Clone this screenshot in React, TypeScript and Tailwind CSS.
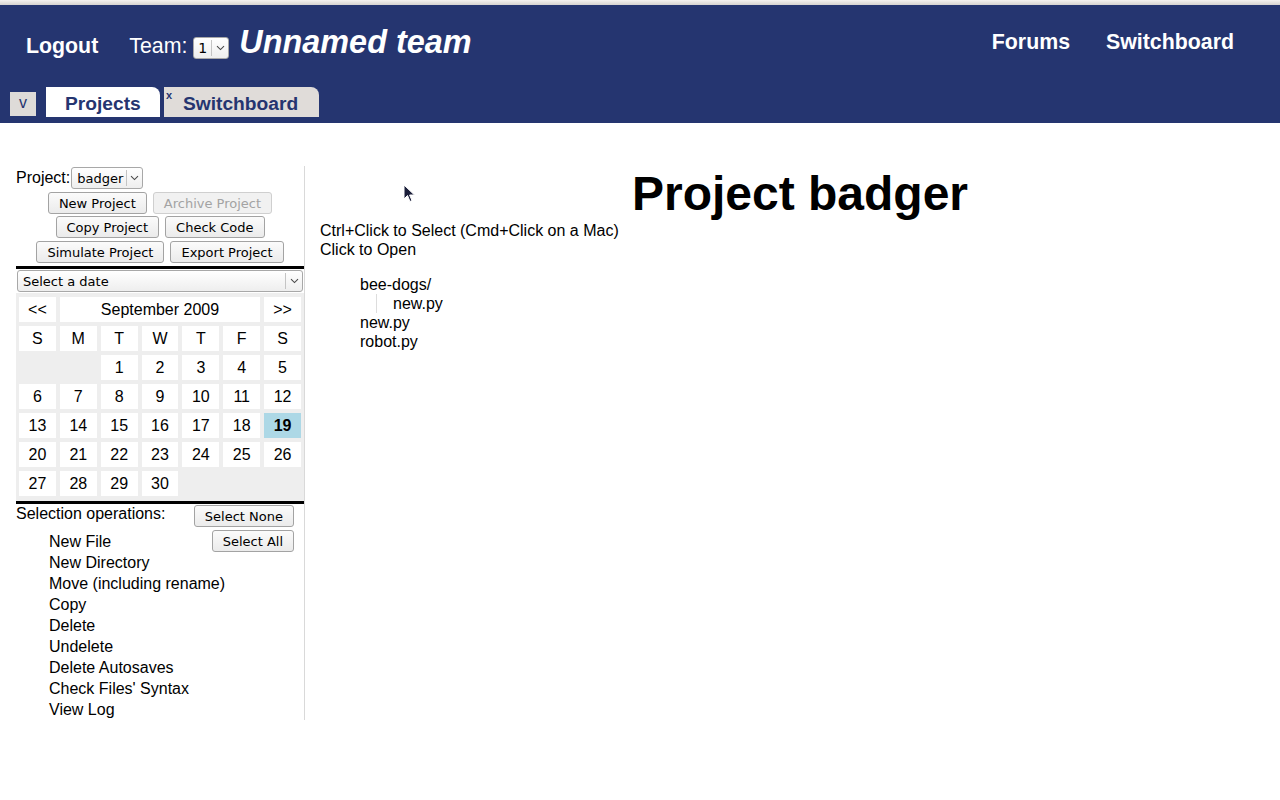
import React from "react";

const NAVY = "bg-[#253570]";

function Chevron() {
  return (
    <svg width="9" height="6" viewBox="0 0 9 6" className="block">
      <path d="M1 1.2 L4.5 4.6 L8 1.2" fill="none" stroke="#4a4a4a" strokeWidth="1.1" />
    </svg>
  );
}

function FakeSelect({ label, className }: { label: string; className: string }) {
  return (
    <div
      className={`flex items-center h-[22px] border border-[#a8a8a8] rounded-[3px] bg-linear-to-b from-white to-[#eeeeee] font-['DejaVu_Sans',sans-serif] text-[13px] text-black ${className}`}
    >
      <span className="flex-1 pl-[5px] pr-[3px] leading-none whitespace-nowrap">{label}</span>
      <span className="w-px self-stretch my-[2px] bg-[#c4c4c4]" />
      <span className="w-[16px] flex justify-center">
        <Chevron />
      </span>
    </div>
  );
}

function Btn({ children, disabled }: { children: React.ReactNode; disabled?: boolean }) {
  return (
    <div
      className={
        disabled
          ? "h-[22px] px-[10px] flex items-center border border-[#cfcfcf] rounded-[3px] bg-[#f1f1f1] text-[#a3a3a3] text-[13px] font-['DejaVu_Sans',sans-serif] leading-none whitespace-nowrap"
          : "h-[22px] px-[10px] flex items-center border border-[#a3a3a3] rounded-[3px] bg-linear-to-b from-[#fbfbfb] to-[#ebebeb] text-black text-[13px] font-['DejaVu_Sans',sans-serif] leading-none whitespace-nowrap"
      }
    >
      {children}
    </div>
  );
}

function Cell({ children, bold, hl }: { children?: React.ReactNode; bold?: boolean; hl?: boolean }) {
  return (
    <div
      className={`h-[25px] flex items-center justify-center text-[16px] leading-none ${hl ? "bg-[#add8e6]" : "bg-white"} ${bold ? "font-bold" : ""}`}
    >
      {children}
    </div>
  );
}

export default function App() {
  const weeks: (number | null)[][] = [
    [null, null, 1, 2, 3, 4, 5],
    [6, 7, 8, 9, 10, 11, 12],
    [13, 14, 15, 16, 17, 18, 19],
    [20, 21, 22, 23, 24, 25, 26],
    [27, 28, 29, 30, null, null, null],
  ];
  const ops = [
    "New File",
    "New Directory",
    "Move (including rename)",
    "Copy",
    "Delete",
    "Undelete",
    "Delete Autosaves",
    "Check Files' Syntax",
    "View Log",
  ];
  return (
    <div className="relative min-h-[800px] bg-white text-black font-['Liberation_Sans',Arial,sans-serif]">
      <div className="h-[5px] bg-linear-to-b from-[#f4f2f0] to-[#d6d3d0]" />
      <div className={`${NAVY} text-white`}>
        <div className="flex justify-between h-[82px]">
          <div className="flex items-baseline pl-[26px] pt-[13px]">
            <span className="font-bold text-[21.33px]">Logout</span>
            <span className="ml-[31px] text-[21.33px]">Team:</span>
            <FakeSelect label="1" className="ml-[6px] w-[36px] h-[21px] text-[14px] [&>span:first-child]:pl-[4px]" />
            <span className="ml-[10px] font-bold italic text-[32.4px]">Unnamed team</span>
          </div>
          <div className="flex items-baseline gap-[36px] pr-[46px] pt-[22px] font-bold text-[21.33px]">
            <span>Forums</span>
            <span>Switchboard</span>
          </div>
        </div>
        <div className="flex items-end pl-[10px] pb-[6px] h-[36px]">
          <div className="w-[26px] h-[24px] mb-[1px] bg-[#dedbd8] text-[#253570] flex items-center justify-center text-[16px] leading-none pb-[2px]">
            v
          </div>
          <div className="ml-[10px] w-[114px] h-[30px] bg-white rounded-tr-[8px] pl-[19px] pt-[3px] flex items-center font-bold text-[19.2px] leading-none text-[#253570]">
            Projects
          </div>
          <div className="relative ml-[4px] w-[155px] h-[30px] bg-[#e0dcd9] rounded-tr-[8px] pl-[19px] pt-[3px] flex items-center font-bold text-[19.2px] leading-none text-[#253570]">
            <span className="absolute left-[2px] top-[3px] text-[11px] leading-none font-bold">x</span>
            Switchboard
          </div>
        </div>
      </div>

      <div className="flex pt-[43px]">
        <div className="ml-4 w-[289px] h-[554px] border-r border-[#d9d9d9] shrink-0 text-[16px] leading-[22px]">
          <div className="flex items-center pt-[1px] h-[23px]">
            <span>Project:</span>
            <FakeSelect label="badger" className="ml-[1px] w-[72px]" />
          </div>
          <div className="flex justify-center gap-[6px] mt-[3px]">
            <Btn>New Project</Btn>
            <Btn disabled>Archive Project</Btn>
          </div>
          <div className="flex justify-center gap-[6px] mt-[2px]">
            <Btn>Copy Project</Btn>
            <Btn>Check Code</Btn>
          </div>
          <div className="flex justify-center gap-[6px] mt-[3px]">
            <Btn>Simulate Project</Btn>
            <Btn>Export Project</Btn>
          </div>
          <div className="mt-[3px] h-[3px] bg-black" />
          <FakeSelect label="Select a date" className="mt-[1px] mx-[1px]" />
          <div className="mt-[1px] bg-[#eeeeee] px-[3px] pt-[4px] pb-[5px]">
            <div className="grid grid-cols-7 gap-[4px]">
              <Cell>&lt;&lt;</Cell>
              <div className="col-span-5">
                <Cell>September 2009</Cell>
              </div>
              <Cell>&gt;&gt;</Cell>
              {["S", "M", "T", "W", "T", "F", "S"].map((d, i) => (
                <Cell key={"d" + i}>{d}</Cell>
              ))}
              {weeks.flat().map((n, i) =>
                n === null ? (
                  <div key={"e" + i} className="h-[25px]" />
                ) : (
                  <Cell key={"n" + i} bold={n === 19} hl={n === 19}>
                    {n}
                  </Cell>
                )
              )}
            </div>
          </div>
          <div className="h-[3px] bg-black" />
          <div className="pt-[1px]">
            <div className="float-right mr-[10px] flex flex-col items-end gap-[3px]">
              <Btn>Select None</Btn>
              <Btn>Select All</Btn>
            </div>
            <div className="leading-[18px]">Selection operations:</div>
            <ul className="mt-[8px] pl-[33px] leading-[21px]">
              {ops.map((o) => (
                <li key={o}>{o}</li>
              ))}
            </ul>
          </div>
        </div>

        <div className="flex-1 pl-[15px]">
          <h1 className="text-center text-[48px] font-bold leading-[55px]">Project badger</h1>
          <div className="text-[16px] leading-[19px]">
            <div>Ctrl+Click to Select (Cmd+Click on a Mac)</div>
            <div>Click to Open</div>
          </div>
          <ul className="mt-[16px] pl-[40px] text-[16px] leading-[19px]">
            <li>bee-dogs/</li>
            <li>
              <ul className="ml-[16px] border-l border-[#dddddd] pl-[16px]">
                <li>new.py</li>
              </ul>
            </li>
            <li>new.py</li>
            <li>robot.py</li>
          </ul>
        </div>
      </div>

      <svg
        className="absolute left-[403px] top-[184px]"
        width="14"
        height="20"
        viewBox="0 0 14 20"
      >
        <path
          d="M1 1 L1 15 L4.5 11.5 L7 17.5 L9 16.6 L6.6 11 L11.5 11 Z"
          fill="#1b1f3a"
          stroke="#ffffff"
          strokeWidth="1"
          strokeLinejoin="round"
        />
      </svg>
    </div>
  );
}
